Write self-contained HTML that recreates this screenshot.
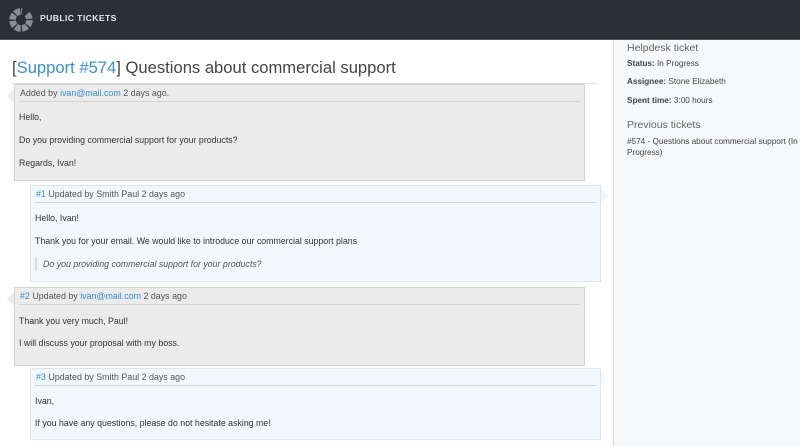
<!DOCTYPE html>
<html><head><style>
*{margin:0;padding:0;box-sizing:border-box}
body{width:800px;height:446px;overflow:hidden;background:#fff;font-family:"Liberation Sans",sans-serif;color:#333;position:relative}
.hdr{position:absolute;left:0;top:0;width:800px;height:40px;background:#2b3037;border-bottom:1px solid #555}
.hdr .t{position:absolute;left:40px;top:13px;color:#e8e8e8;font-weight:bold;font-size:8.6px;letter-spacing:.4px}
.side{position:absolute;left:613px;top:40px;width:187px;height:406px;background:#f7f8fa;border-left:1px solid #ddd}
.side h3{font-weight:normal;font-size:10.5px;color:#666;position:absolute;left:13px}
.side p{position:absolute;left:13px;font-size:8.2px;color:#444}
h1{position:absolute;left:12px;top:58px;font-weight:normal;font-size:16.6px;color:#444;white-space:nowrap}
a{color:#3a8fd0;text-decoration:none}
.box{position:absolute;border:1px solid #d4d4d4;font-size:8.8px;color:#333}
.g{background:#ebebeb;left:14px;width:571px}
.b{background:#f1f8fc;border-color:#dde6ea;left:30px;width:571px}
.box .h{position:absolute;left:4px;right:4px;top:3px;height:14px;border-bottom:1px solid #d4d4d4;font-size:8.9px;color:#555;padding-left:1px}
.box p{position:absolute;left:4px;white-space:nowrap}
.g:before{content:"";position:absolute;left:-8px;top:4px;border:7px solid transparent;border-right-color:#ebebeb;border-left:0;width:0;height:0}
.b:after{content:"";position:absolute;right:-8px;top:3px;border:7px solid transparent;border-left-color:#f1f8fc;border-right:0}
.q{border-left:2px solid #ddd;padding-left:6px;font-style:italic;color:#555}
</style></head><body>
<div class="hdr">
<svg width="40" height="40" style="position:absolute;left:0;top:0"><circle cx="21" cy="20" r="8.5" fill="none" stroke="#8a8d92" stroke-width="6.5" stroke-dasharray="5.4 1.3" transform="rotate(-90 21 20)"/><circle cx="21" cy="20" r="8.5" fill="none" stroke="#2b3037" stroke-width="7" stroke-dasharray="5.4 48" transform="rotate(-84 21 20)"/></svg>
<div class="t">PUBLIC TICKETS</div></div>
<h1>[<a>Support #574</a>] Questions about commercial support</h1>
<div style="position:absolute;left:12px;top:83px;width:585px;border-top:1px solid #ddd"></div>
<div class="box g" style="top:84px;height:97px"><div class="h">Added by <a>ivan@mail.com</a> 2 days ago.</div>
<p style="top:27px">Hello,</p><p style="top:50px">Do you providing commercial support for your products?</p><p style="top:73px">Regards, Ivan!</p></div>
<div class="box b" style="top:185px;height:97px"><div class="h"><a>#1</a> Updated by Smith Paul 2 days ago</div>
<p style="top:27px">Hello, Ivan!</p><p style="top:50px">Thank you for your email. We would like to introduce our commercial support plans</p><p class="q" style="top:71px;line-height:14px">Do you providing commercial support for your products?</p></div>
<div class="box g" style="top:287px;height:79px"><div class="h"><a>#2</a> Updated by <a>ivan@mail.com</a> 2 days ago</div>
<p style="top:28px">Thank you very much, Paul!</p><p style="top:50px">I will discuss your proposal with my boss.</p></div>
<div class="box b" style="top:368px;height:72px"><div class="h"><a>#3</a> Updated by Smith Paul 2 days ago</div>
<p style="top:27px">Ivan,</p><p style="top:49px">If you have any questions, please do not hesitate asking me!</p></div>
<div class="side">
<h3 style="top:2px">Helpdesk ticket</h3>
<p style="top:19px"><b>Status:</b> In Progress</p>
<p style="top:37px"><b>Assignee:</b> Stone Elizabeth</p>
<p style="top:56px"><b>Spent time:</b> 3:00 hours</p>
<h3 style="top:79px">Previous tickets</h3>
<p style="top:96px;width:172px;line-height:11px">#574 - Questions about commercial support (In Progress)</p>
</div>
</body></html>
